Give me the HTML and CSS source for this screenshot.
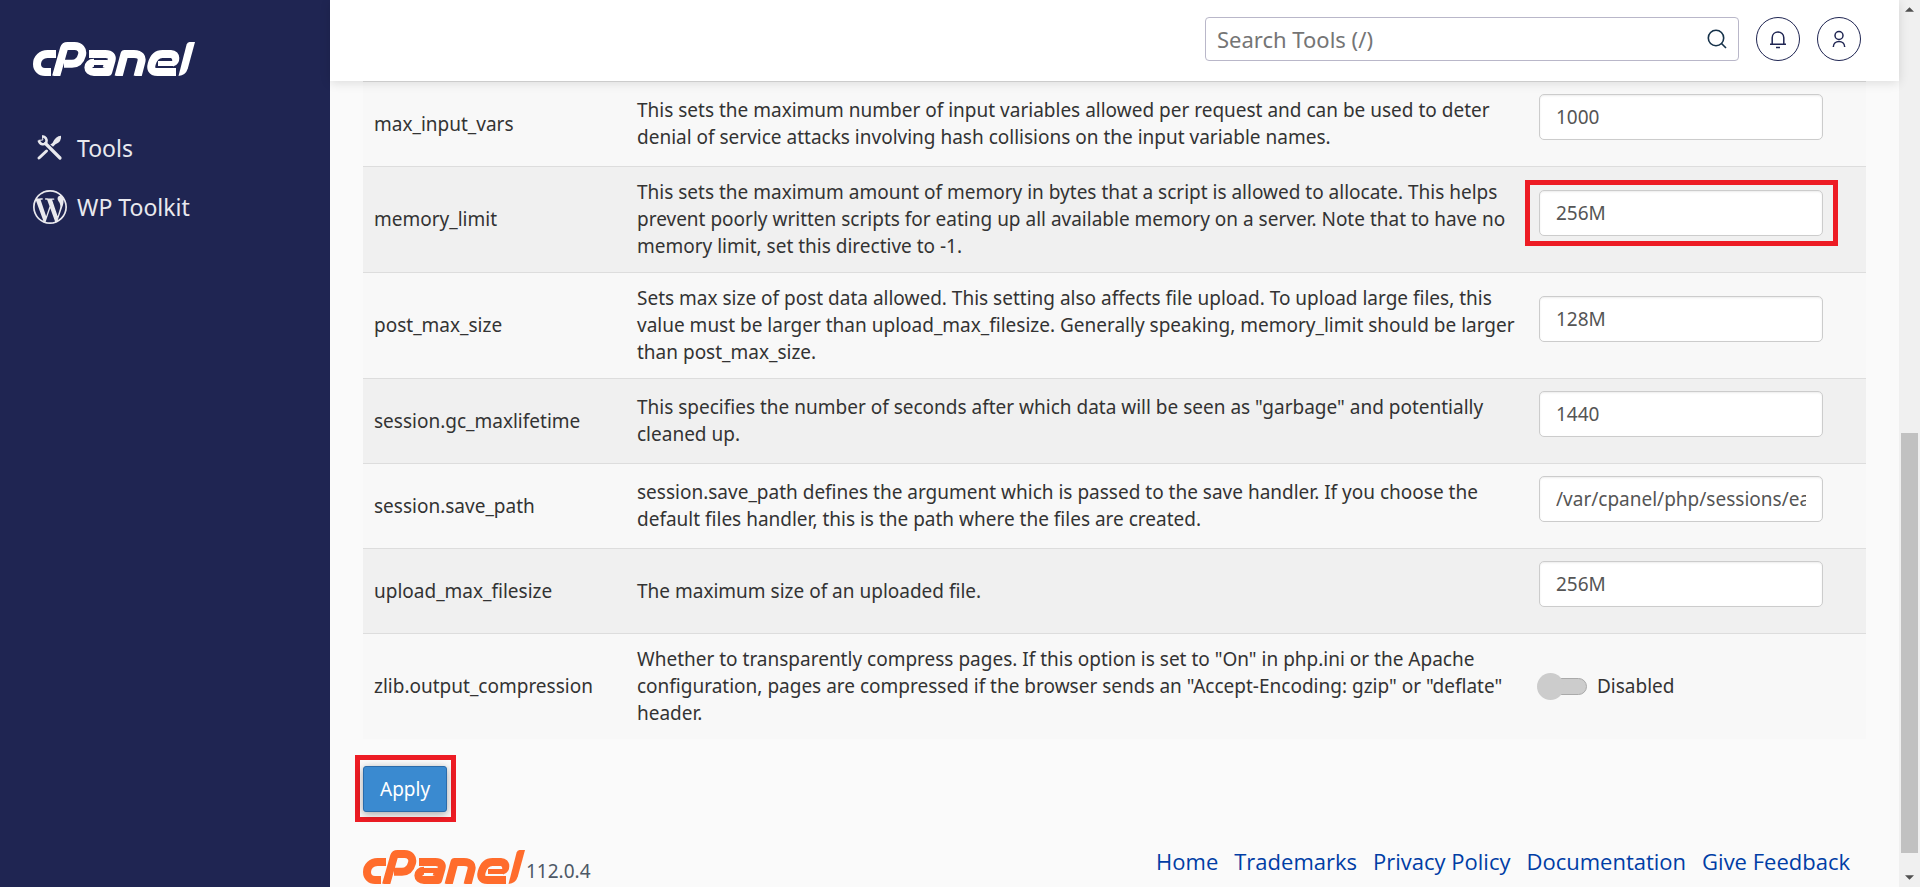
FILE: index.html
```html
<!DOCTYPE html>
<html lang="en">
<head>
<meta charset="utf-8">
<title>cPanel - MultiPHP INI Editor</title>
<link rel="stylesheet" href="styles.css">
</head>
<body>
<svg class="defs" aria-hidden="true">
  <symbol id="cpanel" viewBox="0 0 162 34">
    <g fill="none" stroke="currentColor" stroke-width="8" stroke-linejoin="round">
      <path d="M23 12H14.500C8.500 12 4 16.500 4 22C4 27 7.500 30 12 30H18"/>
      <path d="M23 34.500L31 6.500Q31.800 4 34.500 4H41.500C47 4 50.300 8 49 13C47.500 18.500 44 21.800 39 21.800H31"/>
      <path d="M56 12H72.500C77.500 12 79.600 14.500 78.500 18.500L75.200 30H61C53.500 30 53.500 20.800 61 20.800"/>
      <path d="M61 20.500H74L72 26" stroke-width="5"/>
      <path d="M85.500 34.500L91.500 12H101C107.500 12 109.500 15.500 108.300 20L104.500 34.500"/>
      <path d="M143 30H124.500C118.500 30 117.500 26.500 118.700 22C120.500 15.500 123.500 12 129.500 12H138C144 12 143 20 139.500 20.500"/>
      <path d="M140 21.500H125" stroke-width="5"/>
    </g>
    <path fill="currentColor" d="M156.500 0H162L154.800 26.500Q152.600 33.500 145.500 34L153.600 2.600Q154.400 0 156.500 0Z"/>
  </symbol>
</svg>
<div class="app">
  <aside class="sidebar">
    <a href="#" class="brand" aria-label="cPanel"><svg class="logo"><use href="#cpanel"/></svg></a>
    <nav class="menu">
      <a href="#">
        <svg class="menu-icon" viewBox="0 0 34 34" fill="none" stroke="currentColor" stroke-linecap="round">
          <path d="M12.500 12.500L27 27" stroke-width="3.200"/>
          <path d="M6 27L13.500 20" stroke-width="3"/>
          <path d="M9.200 5.300C12.500 5.500 14.300 8 13.300 11.300C11.500 14.300 7 14 5.700 9.300" stroke-width="2.600" stroke-linecap="butt"/>
          <path d="M9.500 5L9.800 9L6 9.300" stroke-width="1"/>
          <path d="M19.500 12Q22.500 5 28 4.700Q29 10.500 22.500 13.200L20 15.800L17.300 13.600Z" fill="currentColor" stroke="none"/>
        </svg>
        Tools
      </a>
      <a href="#">
        <svg class="menu-icon" viewBox="0 0 24 24" fill="currentColor"><path d="M21.469 6.825c.84 1.537 1.318 3.3 1.318 5.175 0 3.979-2.156 7.456-5.363 9.325l3.295-9.527c.615-1.540.820-2.771.820-3.864 0-.405-.026-.780-.070-1.110m-7.981.105c.647-.030 1.232-.105 1.232-.105.582-.075.514-.930-.067-.899 0 0-1.755.135-2.880.135-1.064 0-2.850-.150-2.850-.150-.585-.030-.661.855-.075.885 0 0 .540.061 1.125.090l1.680 4.605-2.370 7.080L5.354 6.900c.649-.030 1.234-.100 1.234-.100.585-.075.516-.930-.065-.896 0 0-1.746.138-2.874.138-.200 0-.438-.008-.690-.015C4.911 3.150 8.235 1.215 12 1.215c2.809 0 5.365 1.072 7.286 2.833-.046-.003-.091-.009-.141-.009-1.060 0-1.812.923-1.812 1.914 0 .890.513 1.643 1.060 2.531.411.720.890 1.643.890 2.977 0 .915-.354 1.994-.821 3.479l-1.075 3.585-3.900-11.610.001.014zM12 22.784c-1.059 0-2.081-.153-3.048-.437l3.237-9.406 3.315 9.087c.024.053.050.101.078.149-1.120.393-2.325.609-3.582.609M1.211 12c0-1.564.336-3.050.935-4.390L7.290 21.709C3.694 19.960 1.212 16.271 1.211 12M12 0C5.385 0 0 5.385 0 12s5.385 12 12 12 12-5.385 12-12S18.615 0 12 0"/></svg>
        WP Toolkit
      </a>
    </nav>
  </aside>
  <div class="main">
    <header class="topbar">
      <form class="search">
        <input type="text" placeholder="Search Tools (/)" aria-label="Search Tools">
        <button type="button" aria-label="Search"><svg viewBox="0 0 20 20" fill="none" stroke="currentColor" stroke-width="1.600"><circle cx="9" cy="9" r="7.700"/><path d="M14.500 14.500L19 19"/></svg></button>
      </form>
      <button type="button" class="round" aria-label="Notifications"><svg viewBox="0 0 20 20" fill="none" stroke="currentColor" stroke-width="1.500"><path d="M2 15.200H18M4.200 15V8.800C4.200 1.200 15.800 1.200 15.800 8.800V15M8 18.400H12"/></svg></button>
      <button type="button" class="round" aria-label="User"><svg viewBox="0 0 20 20" fill="none" stroke="currentColor" stroke-width="1.500"><circle cx="10" cy="6.500" r="4"/><path d="M4.300 18C4.300 10.500 15.700 10.500 15.700 18"/></svg></button>
    </header>
    <main class="content">
      <table class="directives">
        <tbody>
          <tr>
            <td><label for="max-input-vars">max_input_vars</label></td>
            <td>This sets the maximum number of input variables allowed per request and can be used to deter denial of service attacks involving hash collisions on the input variable names.</td>
            <td><div class="field"><input type="text" id="max-input-vars" value="1000"></div></td>
          </tr>
          <tr>
            <td><label for="memory-limit">memory_limit</label></td>
            <td>This sets the maximum amount of memory in bytes that a script is allowed to allocate. This helps prevent poorly written scripts for eating up all available memory on a server. Note that to have no memory limit, set this directive to -1.</td>
            <td><div class="field marked"><input type="text" id="memory-limit" value="256M"></div></td>
          </tr>
          <tr>
            <td><label for="post-max-size">post_max_size</label></td>
            <td>Sets max size of post data allowed. This setting also affects file upload. To upload large files, this value must be larger than upload_max_filesize. Generally speaking, memory_limit should be larger than post_max_size.</td>
            <td><div class="field"><input type="text" id="post-max-size" value="128M"></div></td>
          </tr>
          <tr>
            <td><label for="gc-maxlifetime">session.gc_maxlifetime</label></td>
            <td>This specifies the number of seconds after which data will be seen as "garbage" and potentially cleaned up.</td>
            <td><div class="field"><input type="text" id="gc-maxlifetime" value="1440"></div></td>
          </tr>
          <tr>
            <td><label for="save-path">session.save_path</label></td>
            <td>session.save_path defines the argument which is passed to the save handler. If you choose the default files handler, this is the path where the files are created.</td>
            <td><div class="field"><input type="text" id="save-path" value="/var/cpanel/php/sessions/ea-php74"></div></td>
          </tr>
          <tr>
            <td><label for="upload-max">upload_max_filesize</label></td>
            <td>The maximum size of an uploaded file.</td>
            <td><div class="field"><input type="text" id="upload-max" value="256M"></div></td>
          </tr>
          <tr>
            <td>zlib.output_compression</td>
            <td>Whether to transparently compress pages. If this option is set to "On" in php.ini or the Apache configuration, pages are compressed if the browser sends an "Accept-Encoding: gzip" or "deflate" header.</td>
            <td><label class="toggle"><input type="checkbox" role="switch">Disabled</label></td>
          </tr>
        </tbody>
      </table>
      <div class="actions"><div class="marked apply-mark"><button type="button" class="apply">Apply</button></div></div>
      <footer class="footer">
        <div class="version"><svg class="logo" role="img" aria-label="cPanel"><use href="#cpanel"/></svg><span>112.0.4</span></div>
        <nav class="links">
          <a href="#">Home</a>
          <a href="#">Trademarks</a>
          <a href="#">Privacy Policy</a>
          <a href="#">Documentation</a>
          <a href="#">Give Feedback</a>
        </nav>
      </footer>
    </main>
  </div>
  <div class="scrollbar" aria-hidden="true">
    <svg viewBox="0 0 10 5"><path d="M5 0L10 5H0Z"/></svg>
    <div class="track"><div class="thumb"></div></div>
    <svg viewBox="0 0 10 5"><path d="M0 0H10L5 5Z"/></svg>
  </div>
</div>
</body>
</html>
```
FILE: styles.css
```css
* { box-sizing: border-box; }

body {
  margin: 0;
  background: #fafafa;
  color: #333;
  font: 19px/27px "Noto Sans", "Open Sans", sans-serif;
}

input, button { font: inherit; color: inherit; }

.defs { position: absolute; width: 0; height: 0; }

.app {
  display: flex;
  height: 100vh;
  overflow: hidden;
}

.logo {
  display: block;
  width: 162px;
  height: 34px;
}

/* Sidebar */
.sidebar {
  flex: none;
  width: 330px;
  padding: 42px 33px;
  background: #1f2552;
  color: #fff;
}

.brand { color: #fff; }

.menu {
  display: flex;
  flex-direction: column;
  gap: 25px;
  margin-top: 55px;
}

.menu a {
  display: flex;
  align-items: center;
  gap: 10px;
  color: #e9e9ee;
  font-size: 23px;
  line-height: 34px;
  text-decoration: none;
}

.menu-icon { width: 34px; height: 34px; }

/* Top bar */
.main {
  flex: 1;
  min-width: 0;
}

.topbar {
  position: relative;
  display: flex;
  justify-content: flex-end;
  align-items: center;
  gap: 17px;
  padding: 17px 38px 20px;
  background: #fff;
  box-shadow: 0 2px 10px rgba(0, 0, 0, 0.12);
}

.search {
  display: flex;
  align-items: center;
  width: 534px;
  height: 44px;
  padding: 0 11px;
  border: 1px solid #b9b7c9;
  border-radius: 4px;
  background: #fff;
}

.search input {
  flex: 1;
  min-width: 0;
  padding: 0;
  border: 0;
  outline: 0;
  background: none;
  font-size: 22px;
  line-height: 30px;
}

.search input::placeholder { color: #757575; }

.search button {
  padding: 0;
  border: 0;
  background: none;
  color: #16324a;
}

.search svg, .round svg { display: block; width: 20px; height: 20px; }

.round {
  display: flex;
  align-items: center;
  justify-content: center;
  width: 44px;
  height: 44px;
  padding: 0;
  border: 1px solid #1f2552;
  border-radius: 50%;
  background: #fff;
  color: #1f2552;
}

/* Directive table */
.content { padding: 0 33px; }

.directives {
  width: 100%;
  table-layout: fixed;
  border-collapse: separate;
  border-spacing: 0;
}

.directives td {
  padding: 12px 0 12px 12px;
  border-top: 1px solid #ddd;
  background: #f8f8f8;
}

.directives tr:nth-child(even) td { background: #f0f0f0; }

.directives td:first-child { width: 262px; padding-left: 11px; }
.directives td:last-child { width: 339px; }

.field {
  position: relative;
  width: 284px;
  margin-bottom: 14px;
}

.field input {
  display: block;
  width: 100%;
  height: 46px;
  padding: 0 16px;
  border: 1px solid #ccc;
  border-radius: 5px;
  background: #fff;
  box-shadow: inset 0 1px 2px rgba(0, 0, 0, 0.08);
  color: #555;
}

.field.marked::after {
  content: "";
  position: absolute;
  inset: -10px -15px -10px -14px;
  border: 5px solid #ed1c24;
  pointer-events: none;
}

.toggle {
  display: flex;
  align-items: center;
  gap: 10px;
}

.toggle input {
  position: relative;
  appearance: none;
  width: 46px;
  height: 17px;
  margin: 0 0 0 2px;
  border: 1px solid #aaa;
  border-radius: 9px;
  background: #ccc;
}

.toggle input::before {
  content: "";
  position: absolute;
  top: -6px;
  left: -5px;
  width: 27px;
  height: 27px;
  border-radius: 50%;
  background: #ccc;
}

/* Actions */
.actions { padding-top: 16px; }

.apply-mark {
  width: max-content;
  margin-left: -8px;
  padding: 6px 4px 5px 3px;
  border: 5px solid #ed1c24;
}

.apply {
  display: block;
  height: 46px;
  padding: 0 16px;
  border: 1px solid #2a6cab;
  border-radius: 3px;
  background: #3a8ad0;
  box-shadow: 0 2px 8px rgba(0, 0, 0, 0.35);
  color: #fff;
}

/* Footer */
.footer {
  display: flex;
  align-items: flex-start;
  justify-content: space-between;
  padding: 28px 16px 0 0;
}

.version {
  display: flex;
  align-items: flex-end;
  gap: 1px;
  color: #ff6c2c;
}

.version span {
  color: #4d5866;
  line-height: 25px;
}

.links {
  display: flex;
  gap: 16px;
  font: 22px/23px "Open Sans", "Noto Sans", sans-serif;
}

.links a { color: #003da5; text-decoration: none; }

/* Scrollbar */
.scrollbar {
  flex: none;
  display: flex;
  flex-direction: column;
  align-items: center;
  width: 21px;
  padding: 7px 0;
  background: #f0f0f0;
}

.scrollbar svg { width: 9px; height: 5px; fill: #505050; }

.track {
  flex: 1;
  display: flex;
  flex-direction: column;
  justify-content: flex-end;
  width: 17px;
  padding-bottom: 22px;
}

.thumb { height: 50%; background: #c1c1c1; }
```
